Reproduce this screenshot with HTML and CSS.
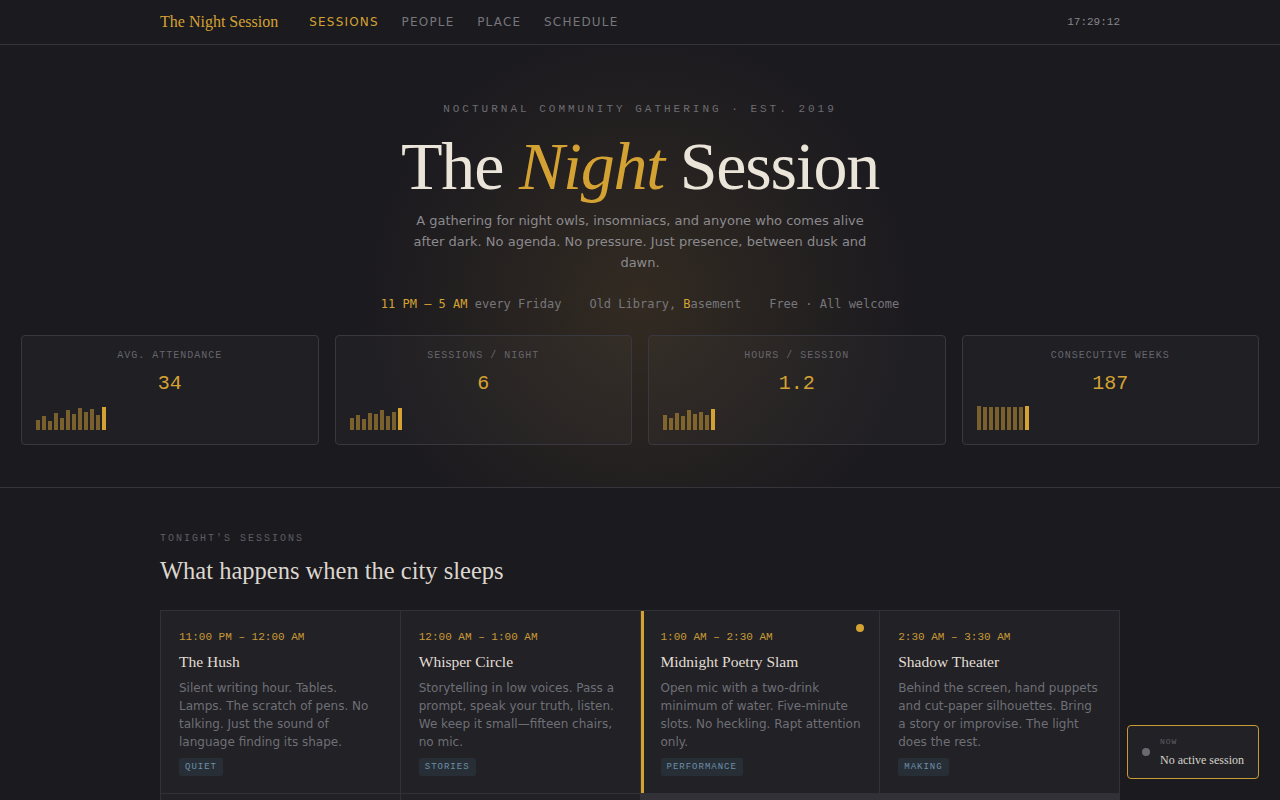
FILE: index.html
```html
<!DOCTYPE html>
<html lang="en">
<head>
<meta charset="utf-8">
<title>The Night Session</title>
<link rel="stylesheet" href="styles.css">
</head>
<body>
<header class="nav">
  <div class="nav-inner">
    <div class="nav-left">
      <span class="brand">The Night Session</span>
      <nav class="links">
        <span class="link active">Sessions</span>
        <span class="link">People</span>
        <span class="link">Place</span>
        <span class="link">Schedule</span>
      </nav>
    </div>
    <span class="clock">17:29:12</span>
  </div>
</header>

<section class="hero">
  <p class="eyebrow">NOCTURNAL COMMUNITY GATHERING · EST. 2019</p>
  <h1 class="title">The <em>Night</em> Session</h1>
  <p class="lede">A gathering for night owls, insomniacs, and anyone who comes alive after dark. No agenda. No pressure. Just presence, between dusk and dawn.</p>
  <div class="meta">
    <span><span class="gold">11 PM – 5 AM</span> every Friday</span>
    <span>Old Library, <span class="gold">B</span>asement</span>
    <span>Free · All welcome</span>
  </div>
  <div class="stats">
    <div class="stat">
      <div class="stat-label">Avg. Attendance</div>
      <div class="stat-value">34</div>
      <div class="bars">
        <i class="bar" style="height:10px"></i><i class="bar" style="height:14px"></i><i class="bar" style="height:9px"></i><i class="bar" style="height:17px"></i><i class="bar" style="height:12px"></i><i class="bar" style="height:20px"></i><i class="bar" style="height:16px"></i><i class="bar" style="height:22px"></i><i class="bar" style="height:18px"></i><i class="bar" style="height:21px"></i><i class="bar" style="height:15px"></i><i class="bar now" style="height:23px"></i>
      </div>
    </div>
    <div class="stat">
      <div class="stat-label">Sessions / Night</div>
      <div class="stat-value">6</div>
      <div class="bars">
        <i class="bar" style="height:12px"></i><i class="bar" style="height:15px"></i><i class="bar" style="height:11px"></i><i class="bar" style="height:17px"></i><i class="bar" style="height:16px"></i><i class="bar" style="height:20px"></i><i class="bar" style="height:14px"></i><i class="bar" style="height:18px"></i><i class="bar now" style="height:22px"></i>
      </div>
    </div>
    <div class="stat">
      <div class="stat-label">Hours / Session</div>
      <div class="stat-value">1.2</div>
      <div class="bars">
        <i class="bar" style="height:15px"></i><i class="bar" style="height:12px"></i><i class="bar" style="height:17px"></i><i class="bar" style="height:14px"></i><i class="bar" style="height:20px"></i><i class="bar" style="height:16px"></i><i class="bar" style="height:18px"></i><i class="bar" style="height:15px"></i><i class="bar now" style="height:21px"></i>
      </div>
    </div>
    <div class="stat">
      <div class="stat-label">Consecutive Weeks</div>
      <div class="stat-value">187</div>
      <div class="bars">
        <i class="bar" style="height:24px"></i><i class="bar" style="height:23px"></i><i class="bar" style="height:23px"></i><i class="bar" style="height:23px"></i><i class="bar" style="height:23px"></i><i class="bar" style="height:23px"></i><i class="bar" style="height:23px"></i><i class="bar" style="height:23px"></i><i class="bar now" style="height:24px"></i>
      </div>
    </div>
  </div>
</section>

<section class="sessions">
  <p class="kicker">TONIGHT'S SESSIONS</p>
  <h2 class="heading">What happens when the city sleeps</h2>
  <div class="grid">
    <article class="cell">
      <div class="time">11:00 PM – 12:00 AM</div>
      <h3 class="name">The Hush</h3>
      <p class="desc">Silent writing hour. Tables. Lamps. The scratch of pens. No talking. Just the sound of language finding its shape.</p>
      <span class="tag">QUIET</span>
    </article>
    <article class="cell">
      <div class="time">12:00 AM – 1:00 AM</div>
      <h3 class="name">Whisper Circle</h3>
      <p class="desc">Storytelling in low voices. Pass a prompt, speak your truth, listen. We keep it small—fifteen chairs, no mic.</p>
      <span class="tag">STORIES</span>
    </article>
    <article class="cell live">
      <span class="live-dot"></span>
      <div class="time">1:00 AM – 2:30 AM</div>
      <h3 class="name">Midnight Poetry Slam</h3>
      <p class="desc">Open mic with a two-drink minimum of water. Five-minute slots. No heckling. Rapt attention only.</p>
      <span class="tag">PERFORMANCE</span>
    </article>
    <article class="cell">
      <div class="time">2:30 AM – 3:30 AM</div>
      <h3 class="name">Shadow Theater</h3>
      <p class="desc">Behind the screen, hand puppets and cut-paper silhouettes. Bring a story or improvise. The light does the rest.</p>
      <span class="tag">MAKING</span>
    </article>
    <article class="cell">
      <div class="time">3:30 AM – 4:30 AM</div>
      <h3 class="name">The Long Table</h3>
      <p class="desc">Tea, toast and conversation with strangers. Sit anywhere. Leave when the pot runs dry.</p>
      <span class="tag">TALK</span>
    </article>
    <article class="cell">
      <div class="time">4:30 AM – 5:00 AM</div>
      <h3 class="name">First Light</h3>
      <p class="desc">We climb to the roof and watch the sky turn grey, then gold. Nobody says a word.</p>
      <span class="tag">QUIET</span>
    </article>
  </div>
</section>

<aside class="toast">
  <span class="toast-dot"></span>
  <div class="toast-text">
    <div class="toast-label">NOW</div>
    <div class="toast-name">No active session</div>
  </div>
</aside>
</body>
</html>
```

FILE: styles.css
```css
* {
  box-sizing: border-box;
  margin: 0;
  padding: 0;
}

body {
  background: #1b1a1f;
  color: #e6e1d7;
  font-family: "DejaVu Sans", sans-serif;
  min-height: 100vh;
}

/* NAV */
.nav {
  border-bottom: 1px solid #34343a;
}

.nav-inner {
  max-width: 960px;
  height: 44px;
  margin: 0 auto;
  display: flex;
  align-items: center;
  justify-content: space-between;
}

.nav-left {
  display: flex;
  align-items: center;
  gap: 31px;
}

.brand {
  font-family: "Liberation Serif", serif;
  font-size: 16px;
  color: #d4a233;
}

.links {
  display: flex;
  gap: 22.7px;
}

.link {
  font-size: 12px;
  letter-spacing: 0.1em;
  text-transform: uppercase;
  color: #76767c;
}

.link.active {
  color: #d4a233;
}

.clock {
  font-family: "Liberation Mono", monospace;
  font-size: 11px;
  color: #86868b;
}

/* HERO */
.hero {
  padding: 57px 21px 42px;
  text-align: center;
  border-bottom: 1px solid #34343a;
  background: radial-gradient(circle at 50% 58%, rgba(190, 140, 50, 0.15) 0, rgba(190, 140, 50, 0.085) 110px, rgba(190, 140, 50, 0.03) 210px, rgba(190, 140, 50, 0) 280px);
}

.eyebrow {
  font-family: "Liberation Mono", monospace;
  font-size: 11px;
  line-height: 14px;
  letter-spacing: 3px;
  color: #6c6c72;
}

.title {
  margin-top: 13px;
  font-family: "Liberation Serif", serif;
  font-weight: 400;
  font-size: 68px;
  line-height: 1.1;
  letter-spacing: -0.018em;
  color: #ebe5d9;
}

.title em {
  color: #d4a233;
}

.lede {
  max-width: 460px;
  margin: 6px auto 0;
  font-size: 13px;
  line-height: 21px;
  color: #8b8a8e;
}

.meta {
  margin-top: 22px;
  display: flex;
  justify-content: center;
  gap: 28px;
  font-family: "DejaVu Sans Mono", monospace;
  font-size: 12px;
  line-height: 18px;
  color: #76767b;
}

.gold {
  color: #d4a233;
}

.stats {
  margin-top: 22px;
  display: grid;
  grid-template-columns: repeat(4, 1fr);
  gap: 16px;
}

.stat {
  border: 1px solid #38383e;
  border-radius: 4px;
  background: rgba(255, 255, 255, 0.025);
  padding: 14px 14px 14px;
}

.stat-label {
  font-family: "Liberation Mono", monospace;
  font-size: 10px;
  line-height: 12px;
  letter-spacing: 1px;
  text-transform: uppercase;
  color: #66666c;
}

.stat-value {
  margin-top: 10px;
  font-family: "Liberation Mono", monospace;
  font-size: 20px;
  line-height: 24px;
  color: #d4a233;
}

.bars {
  margin-top: 10px;
  height: 24px;
  display: flex;
  align-items: flex-end;
  gap: 2px;
}

.bar {
  display: block;
  width: 4px;
  background: rgba(212, 162, 51, 0.5);
}

.bar.now {
  background: #d4a233;
}

/* SESSIONS */
.sessions {
  max-width: 960px;
  margin: 0 auto;
  padding: 44px 0 60px;
}

.kicker {
  font-family: "Liberation Mono", monospace;
  font-size: 10px;
  line-height: 14px;
  letter-spacing: 2px;
  color: #5e5e64;
}

.heading {
  margin-top: 10px;
  font-family: "Liberation Serif", serif;
  font-weight: 400;
  font-size: 24.5px;
  line-height: 1.2;
  color: #dcd7ce;
}

.grid {
  margin-top: 25px;
  display: grid;
  grid-template-columns: repeat(4, 1fr);
  gap: 1px;
  background: #313137;
  border: 1px solid #313137;
}

.cell {
  position: relative;
  background: #212126;
  padding: 19px 18px 17px;
}

.cell.live {
  border-left: 3px solid #d4a233;
  padding-left: 17px;
}

.live-dot {
  position: absolute;
  top: 13px;
  right: 15px;
  width: 8px;
  height: 8px;
  border-radius: 50%;
  background: #d4a233;
}

.time {
  font-family: "Liberation Mono", monospace;
  font-size: 11px;
  line-height: 14px;
  color: #c99a35;
}

.name {
  margin-top: 8px;
  font-family: "Liberation Serif", serif;
  font-weight: 400;
  font-size: 15.5px;
  line-height: 20px;
  color: #e2ddd4;
}

.desc {
  margin-top: 7px;
  font-size: 12px;
  line-height: 18px;
  color: #6f6f75;
}

.tag {
  display: block;
  width: fit-content;
  margin-top: 7px;
  padding: 0 6px;
  font-family: "Liberation Mono", monospace;
  font-size: 9px;
  line-height: 18px;
  letter-spacing: 1px;
  color: #6d8ea8;
  background: #272e36;
  border-radius: 2px;
}

/* TOAST */
.toast {
  position: fixed;
  right: 21px;
  bottom: 21px;
  height: 54px;
  display: flex;
  align-items: center;
  gap: 10px;
  padding: 0 14px;
  background: #222226;
  border: 1px solid #c99a35;
  border-radius: 4px;
}

.toast-dot {
  width: 8px;
  height: 8px;
  border-radius: 50%;
  background: #6a6a70;
}

.toast-label {
  font-family: "Liberation Mono", monospace;
  font-size: 8px;
  line-height: 10px;
  letter-spacing: 1px;
  color: #5e5e64;
}

.toast-name {
  margin-top: 5px;
  font-family: "Liberation Serif", serif;
  font-size: 12px;
  line-height: 16px;
  color: #d8d3ca;
}
```
